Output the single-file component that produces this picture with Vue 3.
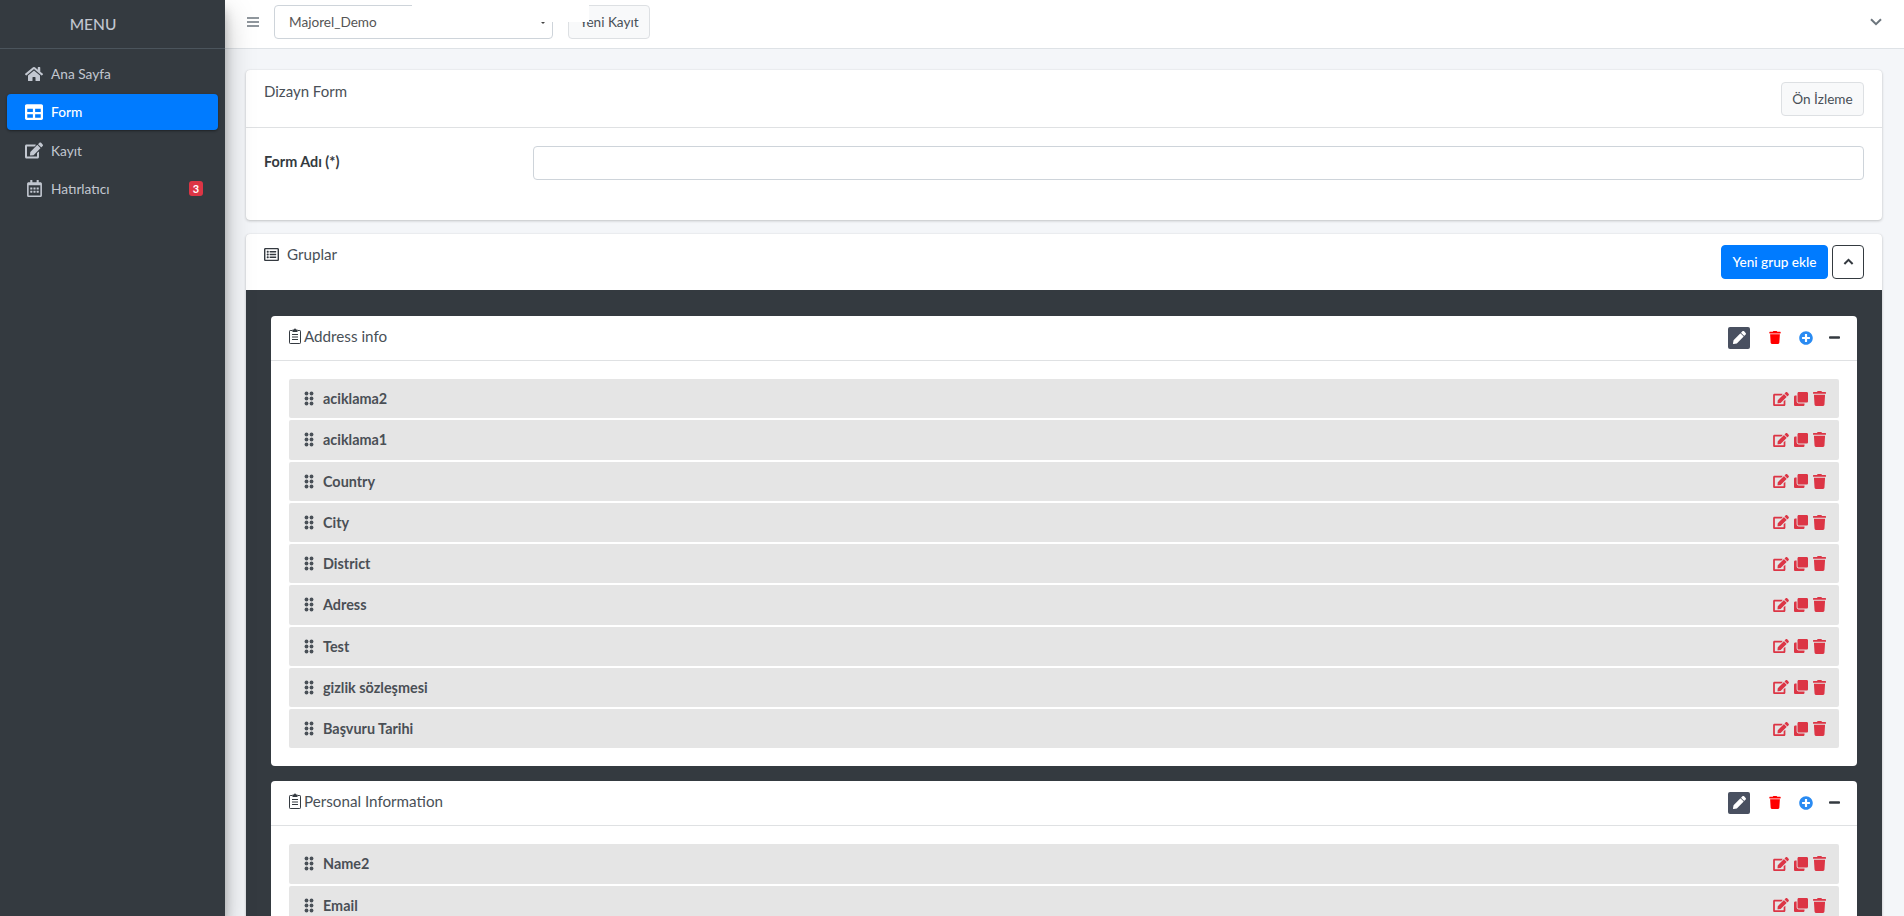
<script setup>
const icons = {
  home: ['0 0 576 512', 'M280.37 148.26L96 300.11V464a16 16 0 0 0 16 16l112.06-.29a16 16 0 0 0 15.92-16V368a16 16 0 0 1 16-16h64a16 16 0 0 1 16 16v95.64a16 16 0 0 0 16 16.05L464 480a16 16 0 0 0 16-16V300L295.67 148.26a12.19 12.19 0 0 0-15.3 0zM571.6 251.47L488 182.56V44.05a12 12 0 0 0-12-12h-56a12 12 0 0 0-12 12v72.61L318.47 43a48 48 0 0 0-61 0L4.34 251.47a12 12 0 0 0-1.6 16.9l25.5 31A12 12 0 0 0 45.15 301l235.22-193.74a12.19 12.19 0 0 1 15.3 0L530.9 301a12 12 0 0 0 16.9-1.6l25.5-31a12 12 0 0 0-1.7-16.93z'],
  table: ['0 0 512 512', 'M464 32H48C21.49 32 0 53.49 0 80v352c0 26.51 21.49 48 48 48h416c26.51 0 48-21.49 48-48V80c0-26.51-21.49-48-48-48zM224 416H64v-96h160v96zm0-160H64v-96h160v96zm224 160H288v-96h160v96zm0-160H288v-96h160v96z'],
  edit: ['0 0 576 512', 'M402.6 83.2l90.2 90.2c3.8 3.8 3.8 10 0 13.8L274.4 405.6l-92.8 10.3c-12.4 1.4-22.9-9.1-21.5-21.5l10.3-92.8L388.8 83.2c3.8-3.8 10-3.8 13.8 0zm162-22.9l-48.8-48.8c-15.2-15.2-39.9-15.2-55.2 0l-35.4 35.4c-3.8 3.8-3.8 10 0 13.8l90.2 90.2c3.8 3.8 10 3.8 13.8 0l35.4-35.4c15.2-15.3 15.2-40 0-55.2zM384 346.2V448H64V128h229.8c3.2 0 6.2-1.3 8.5-3.5l40-40c7.6-7.6 2.2-20.5-8.5-20.5H48C21.5 64 0 85.5 0 112v352c0 26.5 21.5 48 48 48h352c26.5 0 48-21.5 48-48V306.2c0-10.7-12.9-16-20.5-8.5l-40 40c-2.2 2.3-3.5 5.3-3.5 8.5z'],
  calendar: ['0 0 448 512', 'M148 288h-40c-6.6 0-12-5.4-12-12v-40c0-6.6 5.4-12 12-12h40c6.6 0 12 5.4 12 12v40c0 6.6-5.4 12-12 12zm108-12v-40c0-6.6-5.4-12-12-12h-40c-6.6 0-12 5.4-12 12v40c0 6.6 5.4 12 12 12h40c6.6 0 12-5.4 12-12zm96 0v-40c0-6.6-5.4-12-12-12h-40c-6.6 0-12 5.4-12 12v40c0 6.6 5.4 12 12 12h40c6.6 0 12-5.4 12-12zm-96 96v-40c0-6.6-5.4-12-12-12h-40c-6.6 0-12 5.4-12 12v40c0 6.6 5.4 12 12 12h40c6.6 0 12-5.4 12-12zm-96 0v-40c0-6.6-5.4-12-12-12h-40c-6.6 0-12 5.4-12 12v40c0 6.6 5.4 12 12 12h40c6.6 0 12-5.4 12-12zm192 0v-40c0-6.6-5.4-12-12-12h-40c-6.6 0-12 5.4-12 12v40c0 6.6 5.4 12 12 12h40c6.6 0 12-5.4 12-12zm96-260v352c0 26.5-21.5 48-48 48H48c-26.5 0-48-21.5-48-48V112c0-26.5 21.5-48 48-48h48V12c0-6.6 5.4-12 12-12h40c6.6 0 12 5.4 12 12v52h128V12c0-6.6 5.4-12 12-12h40c6.6 0 12 5.4 12 12v52h48c26.5 0 48 21.5 48 48zm-48 346V160H48v298c0 3.3 2.7 6 6 6h340c3.3 0 6-2.7 6-6z'],
  list: ['0 0 512 512', 'M464 32H48C21.49 32 0 53.49 0 80v352c0 26.51 21.49 48 48 48h416c26.51 0 48-21.49 48-48V80c0-26.51-21.49-48-48-48zm-6 400H54a6 6 0 0 1-6-6V86a6 6 0 0 1 6-6h404a6 6 0 0 1 6 6v340a6 6 0 0 1-6 6zm-42-92v24c0 6.627-5.373 12-12 12H204c-6.627 0-12-5.373-12-12v-24c0-6.627 5.373-12 12-12h200c6.627 0 12 5.373 12 12zm0-96v24c0 6.627-5.373 12-12 12H204c-6.627 0-12-5.373-12-12v-24c0-6.627 5.373-12 12-12h200c6.627 0 12 5.373 12 12zm0-96v24c0 6.627-5.373 12-12 12H204c-6.627 0-12-5.373-12-12v-24c0-6.627 5.373-12 12-12h200c6.627 0 12 5.373 12 12zm-252 12c0 19.882-16.118 36-36 36s-36-16.118-36-36 16.118-36 36-36 36 16.118 36 36zm0 96c0 19.882-16.118 36-36 36s-36-16.118-36-36 16.118-36 36-36 36 16.118 36 36zm0 96c0 19.882-16.118 36-36 36s-36-16.118-36-36 16.118-36 36-36 36 16.118 36 36z'],
  trash: ['0 0 448 512', 'M432 32H312l-9.4-18.7A24 24 0 0 0 281.1 0H166.8a23.72 23.72 0 0 0-21.4 13.3L136 32H16A16 16 0 0 0 0 48v32a16 16 0 0 0 16 16h416a16 16 0 0 0 16-16V48a16 16 0 0 0-16-16zM53.2 467a48 48 0 0 0 47.9 45h245.8a48 48 0 0 0 47.9-45L416 128H32z'],
  clone: ['0 0 512 512', 'M464 0c26.51 0 48 21.49 48 48v288c0 26.51-21.49 48-48 48H176c-26.51 0-48-21.49-48-48V48c0-26.51 21.49-48 48-48h288M176 416c-44.112 0-80-35.888-80-80V128H48c-26.51 0-48 21.49-48 48v288c0 26.51 21.49 48 48 48h288c26.51 0 48-21.49 48-48v-48H176z'],
  pencil: ['0 0 512 512', 'M497.9 142.1l-46.1 46.1c-4.7 4.7-12.3 4.7-17 0l-111-111c-4.7-4.7-4.7-12.3 0-17l46.1-46.1c18.7-18.7 49.1-18.7 67.9 0l60.1 60.1c18.8 18.7 18.8 49.1 0 67.9zM284.2 99.8L21.6 362.4.4 483.9c-2.9 16.4 11.4 30.6 27.8 27.8l121.5-21.3 262.6-262.6c4.7-4.7 4.7-12.3 0-17l-111-111c-4.8-4.7-12.4-4.7-17.1 0z'],
  plus: ['0 0 512 512', 'M256 8C119 8 8 119 8 256s111 248 248 248 248-111 248-248S393 8 256 8zm144 276c0 6.6-5.4 12-12 12h-92v92c0 6.6-5.4 12-12 12h-56c-6.6 0-12-5.4-12-12v-92h-92c-6.6 0-12-5.4-12-12v-56c0-6.6 5.4-12 12-12h92v-92c0-6.6 5.4-12 12-12h56c6.6 0 12 5.4 12 12v92h92c6.6 0 12 5.4 12 12v56z'],
  minus: ['0 0 448 512', 'M416 208H32c-17.67 0-32 14.33-32 32v32c0 17.67 14.33 32 32 32h384c17.67 0 32-14.33 32-32v-32c0-17.67-14.33-32-32-32z'],
}

const nav = [
  { label: 'Ana Sayfa', icon: 'home' },
  { label: 'Form', icon: 'table', active: true },
  { label: 'Kayıt', icon: 'edit' },
  { label: 'Hatırlatıcı', icon: 'calendar', badge: 3 },
]

const groups = [
  {
    title: 'Address info',
    items: ['aciklama2', 'aciklama1', 'Country', 'City', 'District', 'Adress', 'Test', 'gizlik sözleşmesi', 'Başvuru Tarihi'],
  },
  { title: 'Personal Information', items: ['Name2', 'Email'] },
]

const gripDots = [[3, 3], [9, 3], [3, 9], [9, 9], [3, 15], [9, 15]]
</script>

<template>
  <div class="app">
    <aside class="sidebar">
      <div class="brand">MENU</div>
      <nav class="nav">
        <a v-for="n in nav" :key="n.label" class="nav-item" :class="{ active: n.active }">
          <span class="nav-icon">
            <svg :viewBox="icons[n.icon][0]" :class="'ni-' + n.icon"><path :d="icons[n.icon][1]" /></svg>
          </span>
          <span class="nav-label">{{ n.label }}</span>
          <span v-if="n.badge" class="badge">{{ n.badge }}</span>
        </a>
      </nav>
    </aside>

    <div class="main">
      <header class="topbar">
        <svg class="bars" viewBox="0 0 12 10"><path d="M0 1h12M0 5h12M0 9h12" /></svg>
        <div class="select">
          <span>Majorel_Demo</span>
          <i class="caret"></i>
        </div>
        <button class="btn btn-light new-rec">Yeni Kayıt</button>
        <svg class="top-chev" viewBox="0 0 12 8"><path d="M1 1.2l5 5 5-5" /></svg>
        <div class="mask"></div>
      </header>

      <main class="content">
        <section class="card form-card">
          <div class="card-head head-form">
            <span class="card-title title-form">Dizayn Form</span>
            <button class="btn btn-light">Ön İzleme</button>
          </div>
          <div class="form-row">
            <label class="form-label">Form Adı (*)</label>
            <input class="input" type="text" />
          </div>
        </section>

        <section class="card groups-card">
          <div class="card-head head-groups">
            <span class="card-title title-groups">
              <svg class="ic-list" :viewBox="icons.list[0]"><path :d="icons.list[1]" /></svg>
              Gruplar
            </span>
            <div class="head-actions">
              <button class="btn btn-primary">Yeni grup ekle</button>
              <button class="btn btn-outline">
                <svg viewBox="0 0 12 8"><path d="M1.5 6.2l4.5-4.5 4.5 4.5" /></svg>
              </button>
            </div>
          </div>

          <div class="groups-body">
            <article v-for="g in groups" :key="g.title" class="group">
              <div class="group-head">
                <span class="group-title">
                  <svg class="ic-clip" viewBox="0 0 12 16">
                    <path d="M3.5 2.5H1.2a.7.7 0 0 0-.7.7v11.6a.7.7 0 0 0 .7.7h9.6a.7.7 0 0 0 .7-.7V3.200a.7.7 0 0 0-.7-.7H8.500" />
                    <path class="clip-top" d="M3.500 1.500H5a1 1 0 0 1 2 0h1.500V4h-5z" />
                    <path d="M3 6.500h6M3 9h6M3 11.500h6" />
                  </svg>
                  {{ g.title }}
                </span>
                <div class="group-actions">
                  <button class="pen-btn"><svg :viewBox="icons.pencil[0]"><path :d="icons.pencil[1]" /></svg></button>
                  <svg class="g-trash" :viewBox="icons.trash[0]"><path :d="icons.trash[1]" /></svg>
                  <svg class="g-plus" :viewBox="icons.plus[0]"><path :d="icons.plus[1]" /></svg>
                  <svg class="g-minus" :viewBox="icons.minus[0]"><path :d="icons.minus[1]" /></svg>
                </div>
              </div>
              <div class="group-body">
                <div v-for="it in g.items" :key="it" class="item">
                  <svg class="grip" viewBox="0 0 12 18">
                    <circle v-for="d in gripDots" :key="d.join()" :cx="d[0]" :cy="d[1]" r="2.300" />
                  </svg>
                  <span class="item-label">{{ it }}</span>
                  <div class="item-actions">
                    <svg class="i-edit" :viewBox="icons.edit[0]"><path :d="icons.edit[1]" /></svg>
                    <svg class="i-clone" :viewBox="icons.clone[0]"><path :d="icons.clone[1]" /></svg>
                    <svg class="i-trash" :viewBox="icons.trash[0]"><path :d="icons.trash[1]" /></svg>
                  </div>
                </div>
              </div>
            </article>
          </div>
        </section>
      </main>
    </div>
  </div>
</template>

<style>
html, body { margin: 0; height: 100%; overflow: hidden; }
</style>

<style scoped>
.app {
  display: flex;
  height: 916px;
  overflow: hidden;
  background: #f4f6f9;
  font-family: "Lato", "Noto Sans", sans-serif;
  font-size: 14px;
  color: #495057;
}
svg { display: block; fill: currentColor; }

/* sidebar */
.sidebar {
  width: 225px;
  flex: none;
  background: #343a40;
  box-shadow: 0 14px 28px rgba(0,0,0,.25), 0 10px 10px rgba(0,0,0,.22);
  position: relative;
  z-index: 2;
}
.brand {
  height: 48px;
  line-height: 48px;
  text-align: center;
  border-bottom: 1px solid #4b545c;
  color: #c2c7d0;
  font-size: 15.500px;
  padding-right: 39px;
  font-weight: 500;
}
.nav { display: flex; flex-direction: column; gap: 2.400px; padding: 6.500px 7px 0; }
.nav-item {
  height: 36px;
  display: flex;
  align-items: center;
  padding: 0 15px 0 18px;
  border-radius: 4px;
  color: #c2c7d0;
  font-size: 13.700px;
}
.nav-item.active {
  background: #007bff;
  color: #fff;
  box-shadow: 0 1px 3px rgba(0,0,0,.2), 0 1px 2px rgba(0,0,0,.24);
  font-weight: 500;
}
.nav-icon { width: 18px; margin-right: 8px; display: flex; justify-content: center; }
.ni-home { width: 18px; height: 16px; }
.ni-table { width: 18px; height: 18px; }
.ni-edit { width: 19px; height: 17px; }
.ni-calendar { width: 15px; height: 17px; }
.nav-label { flex: 1; }
.badge {
  width: 14px;
  height: 15px;
  border-radius: 3px;
  background: #dc3545;
  color: #fff;
  font-size: 11px;
  font-weight: 700;
  display: flex;
  align-items: center;
  justify-content: center;
}

/* top bar */
.main { flex: 1; min-width: 0; display: flex; flex-direction: column; }
.topbar {
  position: relative;
  height: 48px;
  flex: none;
  box-sizing: content-box;
  background: #fff;
  border-bottom: 1px solid #dee2e6;
  display: flex;
  align-items: flex-start;
  padding-left: 22px;
}
.bars { width: 12px; height: 10px; margin-top: 17px; fill: none; stroke: #6c757d; stroke-width: 1.500; }
.select {
  width: 279px;
  height: 34px;
  box-sizing: border-box;
  margin: 5px 0 0 15px;
  border: 1px solid #ced4da;
  border-radius: 4px;
  background: #fff;
  display: flex;
  align-items: center;
  justify-content: space-between;
  padding: 0 6px 0 14px;
  font-size: 13.600px;
  color: #555;
}
.caret { width: 0; height: 0; border: 3.500px solid transparent; border-top-color: #444; border-bottom: 0; }
.btn {
  font-family: inherit;
  font-size: 13.600px;
  height: 34px;
  border-radius: 4px;
  padding: 0 11px;
  box-sizing: border-box;
  cursor: pointer;
  white-space: nowrap;
}
.btn-light { background: #f8f9fa; border: 1px solid #dde0e3; color: #495057; width: 83px; padding: 0; }
.new-rec { margin: 5px 0 0 15px; width: 82px; }
.top-chev { position: absolute; right: 22px; top: 18px; width: 12px; height: 8px; fill: none; stroke: #6c757d; stroke-width: 2; }
.mask { position: absolute; left: 187px; top: 0; width: 177px; height: 22px; background: #fff; }

/* content */
.content { padding: 21px 22px 0 21px; display: flex; flex-direction: column; gap: 14px; }
.card {
  background: #fff;
  border-radius: 4px;
  box-shadow: 0 0 1px rgba(0,0,0,.125), 0 1px 3px rgba(0,0,0,.2);
}
.card-head {
  display: flex;
  justify-content: space-between;
  align-items: flex-start;
  padding-left: 18px;
  padding-right: 18px;
  box-sizing: border-box;
}
.head-form { height: 58px; padding-top: 12px; border-bottom: 1px solid #dfe1e3; }
.head-groups { height: 56px; padding-top: 11px; }
.card-title { font-size: 15.200px; line-height: 20px; color: #495057; display: flex; align-items: center; }
.title-form { margin-top: -1px; font-size: 15px; }
.title-groups { margin-top: -1px; }
.ic-list { width: 15px; height: 15px; margin-right: 8px; color: #343a40; }
.form-row {
  display: grid;
  grid-template-columns: 269px 1fr;
  align-items: center;
  padding: 18px 18px 40px;
}
.form-label { font-weight: 700; font-size: 14.400px; color: #343a40; margin-bottom: 4px; }
.input {
  height: 34px;
  box-sizing: border-box;
  width: 100%;
  border: 1px solid #ced4da;
  border-radius: 4px;
  background: #fff;
  outline: none;
}
.head-actions { display: flex; gap: 4px; }
.btn-primary { background: #007bff; border: 1px solid #007bff; color: #fff; width: 107px; padding: 0; font-weight: 500; }
.btn-outline { width: 32px; padding: 0; background: #fff; border: 1px solid #343a40; display: flex; align-items: center; justify-content: center; }
.btn-outline svg { width: 11px; height: 8px; fill: none; stroke: #343a40; stroke-width: 2.200; }

/* groups */
.groups-body {
  background: #343a40;
  padding: 26px 25px;
  display: flex;
  flex-direction: column;
  gap: 15px;
  border-radius: 0 0 4px 4px;
}
.group { background: #fff; border-radius: 4px; }
.group-head {
  height: 45px;
  box-sizing: border-box;
  border-bottom: 1px solid #dfe1e3;
  display: flex;
  align-items: center;
  justify-content: space-between;
  padding: 0 17px 1px 18px;
}
.group-title { display: flex; align-items: center; font-size: 15.200px; color: #495057; margin-bottom: 3px; }
.ic-clip { width: 12px; height: 16px; margin-right: 3px; fill: none; stroke: #343a40; stroke-width: 1; }
.clip-top { fill: #343a40; stroke: none; }
.group-actions { display: flex; align-items: center; }
.pen-btn {
  width: 22px;
  height: 22px;
  padding: 0;
  border: 0;
  border-radius: 2px;
  background: #495060;
  color: #fff;
  display: flex;
  align-items: center;
  justify-content: center;
  margin-right: 19px;
}
.pen-btn svg { width: 13px; height: 13px; }
.g-trash { width: 12px; height: 13px; color: #f00; margin-right: 18px; }
.g-plus { width: 14px; height: 14px; color: #2a8bf2; margin-right: 16px; }
.g-minus { width: 11px; height: 13px; color: #343a40; }
.group-body { padding: 18px; display: flex; flex-direction: column; gap: 2px; }
.item {
  height: 39.250px;
  background: #e5e5e5;
  border-radius: 2px;
  display: flex;
  align-items: center;
  padding: 0 13px 0 15px;
}
.grip { width: 10px; height: 15px; color: #495057; margin-right: 9px; }
.item-label { flex: 1; font-weight: 700; font-size: 14.400px; color: #4a4f55; }
.item-actions { display: flex; align-items: center; color: #dc3545; }
.i-edit { width: 16px; height: 14px; margin-right: 5px; }
.i-clone { width: 14px; height: 14px; margin-right: 5px; }
.i-trash { width: 13px; height: 15px; }
</style>
